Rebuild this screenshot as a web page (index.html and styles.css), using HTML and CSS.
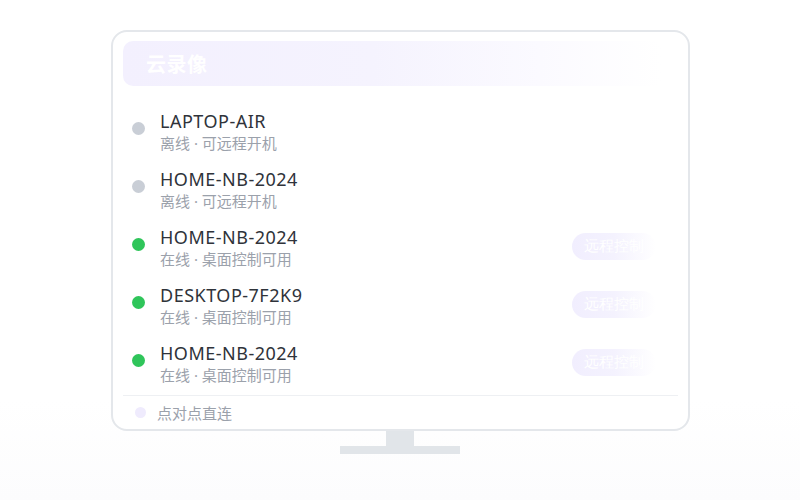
FILE: index.html
```html
<!DOCTYPE html>
<html lang="zh">
<head>
<meta charset="utf-8">
<title>云录像</title>
<link rel="stylesheet" href="styles.css">
</head>
<body>
<div class="scene">
  <div class="monitor">
    <div class="header"><span class="title">云录像</span></div>
    <ul class="list">
      <li class="row">
        <span class="dot off"></span>
        <div class="info"><div class="name">LAPTOP-AIR</div><div class="sub">离线 · 可远程开机</div></div>
      </li>
      <li class="row">
        <span class="dot off"></span>
        <div class="info"><div class="name">HOME-NB-2024</div><div class="sub">离线 · 可远程开机</div></div>
      </li>
      <li class="row">
        <span class="dot on"></span>
        <div class="info"><div class="name">HOME-NB-2024</div><div class="sub">在线 · 桌面控制可用</div></div>
        <span class="btn">远程控制</span>
      </li>
      <li class="row">
        <span class="dot on"></span>
        <div class="info"><div class="name">DESKTOP-7F2K9</div><div class="sub">在线 · 桌面控制可用</div></div>
        <span class="btn">远程控制</span>
      </li>
      <li class="row">
        <span class="dot on"></span>
        <div class="info"><div class="name">HOME-NB-2024</div><div class="sub">在线 · 桌面控制可用</div></div>
        <span class="btn">远程控制</span>
      </li>
    </ul>
    <div class="footer"><span class="fdot"></span><span class="ftext">点对点直连</span></div>
  </div>
  <div class="neck"></div>
  <div class="base"></div>
</div>
</body>
</html>
```
FILE: styles.css
```css
html, body {
  margin: 0;
  padding: 0;
  background: #ffffff;
}
body {
  width: 800px;
  height: 500px;
  overflow: hidden;
  font-family: "Noto Sans", "Noto Sans CJK SC", sans-serif;
  background: linear-gradient(180deg, #ffffff 0%, #ffffff 80%, #fcfcfd 100%);
}
.scene {
  display: flex;
  flex-direction: column;
  align-items: center;
  padding-top: 30px;
}
.monitor {
  box-sizing: border-box;
  width: 579px;
  height: 401px;
  border: 2px solid #e4e7eb;
  border-radius: 16px;
  padding: 9px 10px 0 10px;
  margin-left: 1px;
  display: flex;
  flex-direction: column;
  background: #fff;
}
.monitor > * {
  flex: none;
}
.header {
  height: 45px;
  border-radius: 10px;
  background: linear-gradient(90deg, #f3f0fe 0%, #f5f3fe 45%, #fbfaff 75%, rgba(255,255,255,0) 97%);
  display: flex;
  align-items: center;
  padding-left: 23px;
}
.title {
  color: #ffffff;
  font-size: 20px;
  font-weight: 700;
  letter-spacing: 0.5px;
}
.list {
  list-style: none;
  margin: 17px 0 0 0;
  padding: 0;
}
.row {
  height: 58px;
  display: flex;
  align-items: center;
  box-sizing: border-box;
  padding-left: 9px;
  padding-right: 22px;
}
.dot {
  width: 13px;
  height: 13px;
  border-radius: 50%;
  flex: none;
  margin-top: -8px;
}
.dot.off { background: #c9ced6; }
.dot.on { background: #2fc55a; }
.info {
  margin-left: 15px;
  flex: 1;
}
.name {
  font-size: 18px;
  line-height: 23px;
  color: #2f333a;
  letter-spacing: 0.5px;
}
.sub {
  font-size: 15px;
  line-height: 21px;
  color: #9ba1ab;
}
.btn {
  flex: none;
  height: 27px;
  line-height: 27px;
  padding: 0 12px;
  border-radius: 14px;
  background: linear-gradient(90deg, #f1eefe 0%, #f4f2fe 50%, rgba(255,255,255,0) 100%);
  color: #ffffff;
  font-family: "Liberation Serif", serif;
  font-size: 15px;
  margin-top: -4px;
}
.footer {
  border-top: 1px solid #eef0f3;
  margin-top: 2px;
  height: 32px;
  display: flex;
  align-items: center;
  padding-left: 12px;
}
.fdot {
  width: 11px;
  height: 11px;
  border-radius: 50%;
  background: #efebfd;
}
.ftext {
  margin-left: 11px;
  font-size: 15px;
  color: #9ba1ab;
  padding-top: 1px;
}
.neck {
  width: 28px;
  height: 15px;
  background: #e1e5e9;
}
.base {
  width: 120px;
  height: 8px;
  background: #e1e5e9;
}
```
